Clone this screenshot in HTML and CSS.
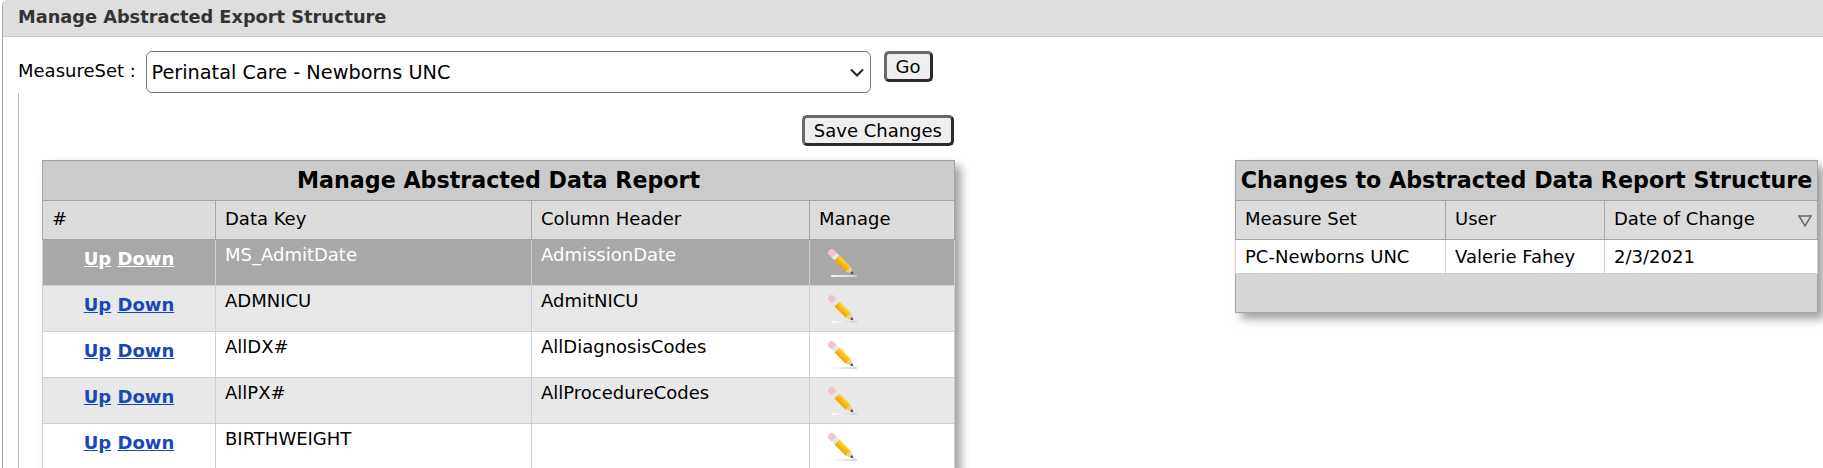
FILE: index.html
```html
<!DOCTYPE html>
<html lang="en">
<head>
<meta charset="utf-8">
<title>Manage Abstracted Export Structure</title>
<link rel="stylesheet" href="styles.css">
</head>
<body>
<svg class="defs" width="0" height="0" aria-hidden="true">
  <defs>
    <linearGradient id="pbody" x1="0" y1="0" x2="0" y2="1">
      <stop offset="0" stop-color="#ffd23c"/>
      <stop offset="0.55" stop-color="#fdb70c"/>
      <stop offset="1" stop-color="#f0a400"/>
    </linearGradient>
    <linearGradient id="pshadow" x1="0" y1="0" x2="1" y2="0">
      <stop offset="0" stop-color="#fff" stop-opacity="0.9"/>
      <stop offset="1" stop-color="#cfcfcf"/>
    </linearGradient>
    <symbol id="pencil" viewBox="0 0 32 32">
      <rect x="5" y="28" width="26" height="2" rx="1" fill="url(#pshadow)"/>
      <g transform="translate(6 6) rotate(45)">
        <path d="M-1 -3.5H3V3.5H-1A3 3 0 0 1 -4 0A3 3 0 0 1 -1 -3.5Z" fill="#f2c4c4"/>
        <rect x="3" y="-3.5" width="4" height="7" fill="#dce9ef"/>
        <rect x="7" y="-3.5" width="16" height="7" fill="url(#pbody)"/>
        <path d="M23 -3.5L28.5 -1V1L23 3.5Z" fill="#e6cfa0"/>
        <path d="M27 -1.6L30.5 0L27 1.6Z" fill="#4a4a4a"/>
      </g>
    </symbol>
  </defs>
</svg>
<div class="page">
  <h1 class="title">Manage Abstracted Export Structure</h1>
  <form class="filter">
    <label class="filter-label" for="ms">MeasureSet :</label>
    <div class="select-wrap">
      <select id="ms" class="filter-select">
        <option>Perinatal Care - Newborns UNC</option>
      </select>
      <svg class="chevron" viewBox="0 0 14 9"><path d="M1 1.5L7 7.5L13 1.5" fill="none" stroke="#222" stroke-width="2"/></svg>
    </div>
    <button type="button" class="btn btn-go">Go</button>
  </form>
  <div class="content">
    <section class="left">
      <div class="actions"><button type="button" class="btn btn-save">Save Changes</button></div>
      <table class="grid report">
        <colgroup><col class="c1"><col class="c2"><col class="c3"><col class="c4"></colgroup>
        <thead>
          <tr><th class="cap" colspan="4">Manage Abstracted Data Report</th></tr>
          <tr><th class="hd">#</th><th class="hd">Data Key</th><th class="hd">Column Header</th><th class="hd">Manage</th></tr>
        </thead>
        <tbody>
          <tr class="sel">
            <td class="move"><a href="#">Up</a> <a href="#">Down</a></td><td>MS_AdmitDate</td><td>AdmissionDate</td>
            <td class="edit"><svg class="pen"><use href="#pencil"/></svg></td>
          </tr>
          <tr class="alt">
            <td class="move"><a href="#">Up</a> <a href="#">Down</a></td><td>ADMNICU</td><td>AdmitNICU</td>
            <td class="edit"><svg class="pen"><use href="#pencil"/></svg></td>
          </tr>
          <tr>
            <td class="move"><a href="#">Up</a> <a href="#">Down</a></td><td>AllDX#</td><td>AllDiagnosisCodes</td>
            <td class="edit"><svg class="pen"><use href="#pencil"/></svg></td>
          </tr>
          <tr class="alt">
            <td class="move"><a href="#">Up</a> <a href="#">Down</a></td><td>AllPX#</td><td>AllProcedureCodes</td>
            <td class="edit"><svg class="pen"><use href="#pencil"/></svg></td>
          </tr>
          <tr>
            <td class="move"><a href="#">Up</a> <a href="#">Down</a></td><td>BIRTHWEIGHT</td><td></td>
            <td class="edit"><svg class="pen"><use href="#pencil"/></svg></td>
          </tr>
        </tbody>
      </table>
    </section>
    <section class="right">
      <table class="grid changes">
        <colgroup><col class="d1"><col class="d2"><col class="d3"></colgroup>
        <thead>
          <tr><th class="cap" colspan="3">Changes to Abstracted Data Report Structure</th></tr>
          <tr>
            <th class="hd">Measure Set</th><th class="hd">User</th>
            <th class="hd"><div class="sortable">Date of Change
              <svg class="sort" viewBox="0 0 14 12"><path d="M1 1H13L7 11Z" fill="#dcdcdc" stroke="#666" stroke-width="1.5"/></svg>
            </div></th>
          </tr>
        </thead>
        <tbody>
          <tr><td>PC-Newborns UNC</td><td>Valerie Fahey</td><td>2/3/2021</td></tr>
        </tbody>
        <tfoot><tr><td class="foot" colspan="3"></td></tr></tfoot>
      </table>
    </section>
  </div>
</div>
</body>
</html>
```

FILE: styles.css
```css
html, body {
  margin: 0;
  height: 468px;
  overflow: hidden;
  background: #fff;
}
body {
  font-family: "DejaVu Sans", Verdana, sans-serif;
  font-size: 18px;
  color: #000;
}
.defs { position: absolute; }
.page {
  margin-left: 2px;
  border-left: 1px solid #a8a8a8;
  border-top-left-radius: 6px;
  min-height: 468px;
}
.title {
  margin: 0;
  height: 36px;
  line-height: 35px;
  padding-left: 15px;
  background: #dedede;
  border-bottom: 1px solid #c6c6c6;
  font-size: 17.75px;
  font-weight: bold;
  color: #333;
  border-top-left-radius: 6px;
}
.filter {
  display: flex;
  align-items: flex-start;
  margin-top: 14px;
  padding-left: 15px;
}
.filter-label { line-height: 40px; width: 127.5px; flex: none; white-space: nowrap; }
.select-wrap { position: relative; width: 725px; height: 42px; }
.filter-select {
  appearance: none;
  width: 100%;
  height: 42px;
  padding: 0 24px 0 5px;
  border: 1px solid #767676;
  border-radius: 6px;
  background: #fff;
  font: inherit;
  font-size: 19.3px;
  color: #000;
}
.chevron { position: absolute; right: 7px; top: 17px; width: 14px; height: 9px; pointer-events: none; }
.btn {
  height: 31px;
  padding: 0 8px;
  border: 3px solid;
  border-color: #6a6a6a #2b2b2b #2b2b2b #6a6a6a;
  border-radius: 5px;
  background: #efefef;
  font: inherit;
  color: #000;
}
.btn-go { margin-left: 13px; width: 49px; }
.btn-save { padding: 0 9px; }
.content {
  display: flex;
  align-items: flex-start;
  margin-left: 15px;
  border-left: 1px solid #c2bbae;
  padding-left: 23px;
  height: 400px;
}
.left { width: 912px; }
.actions { display: flex; justify-content: flex-end; padding-top: 22px; height: 45px; }
.right { margin-left: 281px; padding-top: 67px; }
.grid {
  table-layout: fixed;
  border-collapse: collapse;
  border: 1px solid #a4a4a4;
  box-shadow: 6px 6px 9px #a0a0a0;
  background: #fff;
}
.report { width: 912px; }
.changes { width: 582px; }
.c1 { width: 173px; } .c2 { width: 316px; } .c3 { width: 278px; } .c4 { width: 145px; }
.d1 { width: 210px; } .d2 { width: 159px; } .d3 { width: 213px; }
.grid th {
  padding: 0 9px;
  background: #dcdcdc;
  border: 1px solid #a4a4a4;
  font-weight: normal;
  text-align: left;
}
.grid th.hd { height: 35px; padding-bottom: 3px; }
.grid th.cap {
  height: 37px;
  padding: 0 0 2px;
  background: #cbcbcb;
  font-size: 22.2px;
  font-weight: bold;
  text-align: center;
}
.grid td {
  height: 46px;
  padding: 4px 9px;
  box-sizing: border-box;
  vertical-align: top;
  border: 1px solid #cfcfcf;
}
.changes td { height: 34px; vertical-align: middle; padding: 0 9px; }
.grid td.foot { height: 39px; background: #d6d6d6; border-color: #a4a4a4; }
.alt td { background: #e8e8e8; }
.sel td { background: #a8a8a8; color: #fff; }
.grid td.move { text-align: center; vertical-align: middle; font-weight: bold; padding: 0 9px 8px; }
.move a { color: #1a48b8; }
.sel .move a { color: #fff; }
.grid td.edit { padding: 7px 0 0 16px; }
.pen { display: block; width: 32px; height: 32px; }
.sortable { display: flex; justify-content: space-between; align-items: center; }
.sort { width: 14px; height: 12px; margin: 4px 0 0 0; position: relative; left: 4px; }
```
